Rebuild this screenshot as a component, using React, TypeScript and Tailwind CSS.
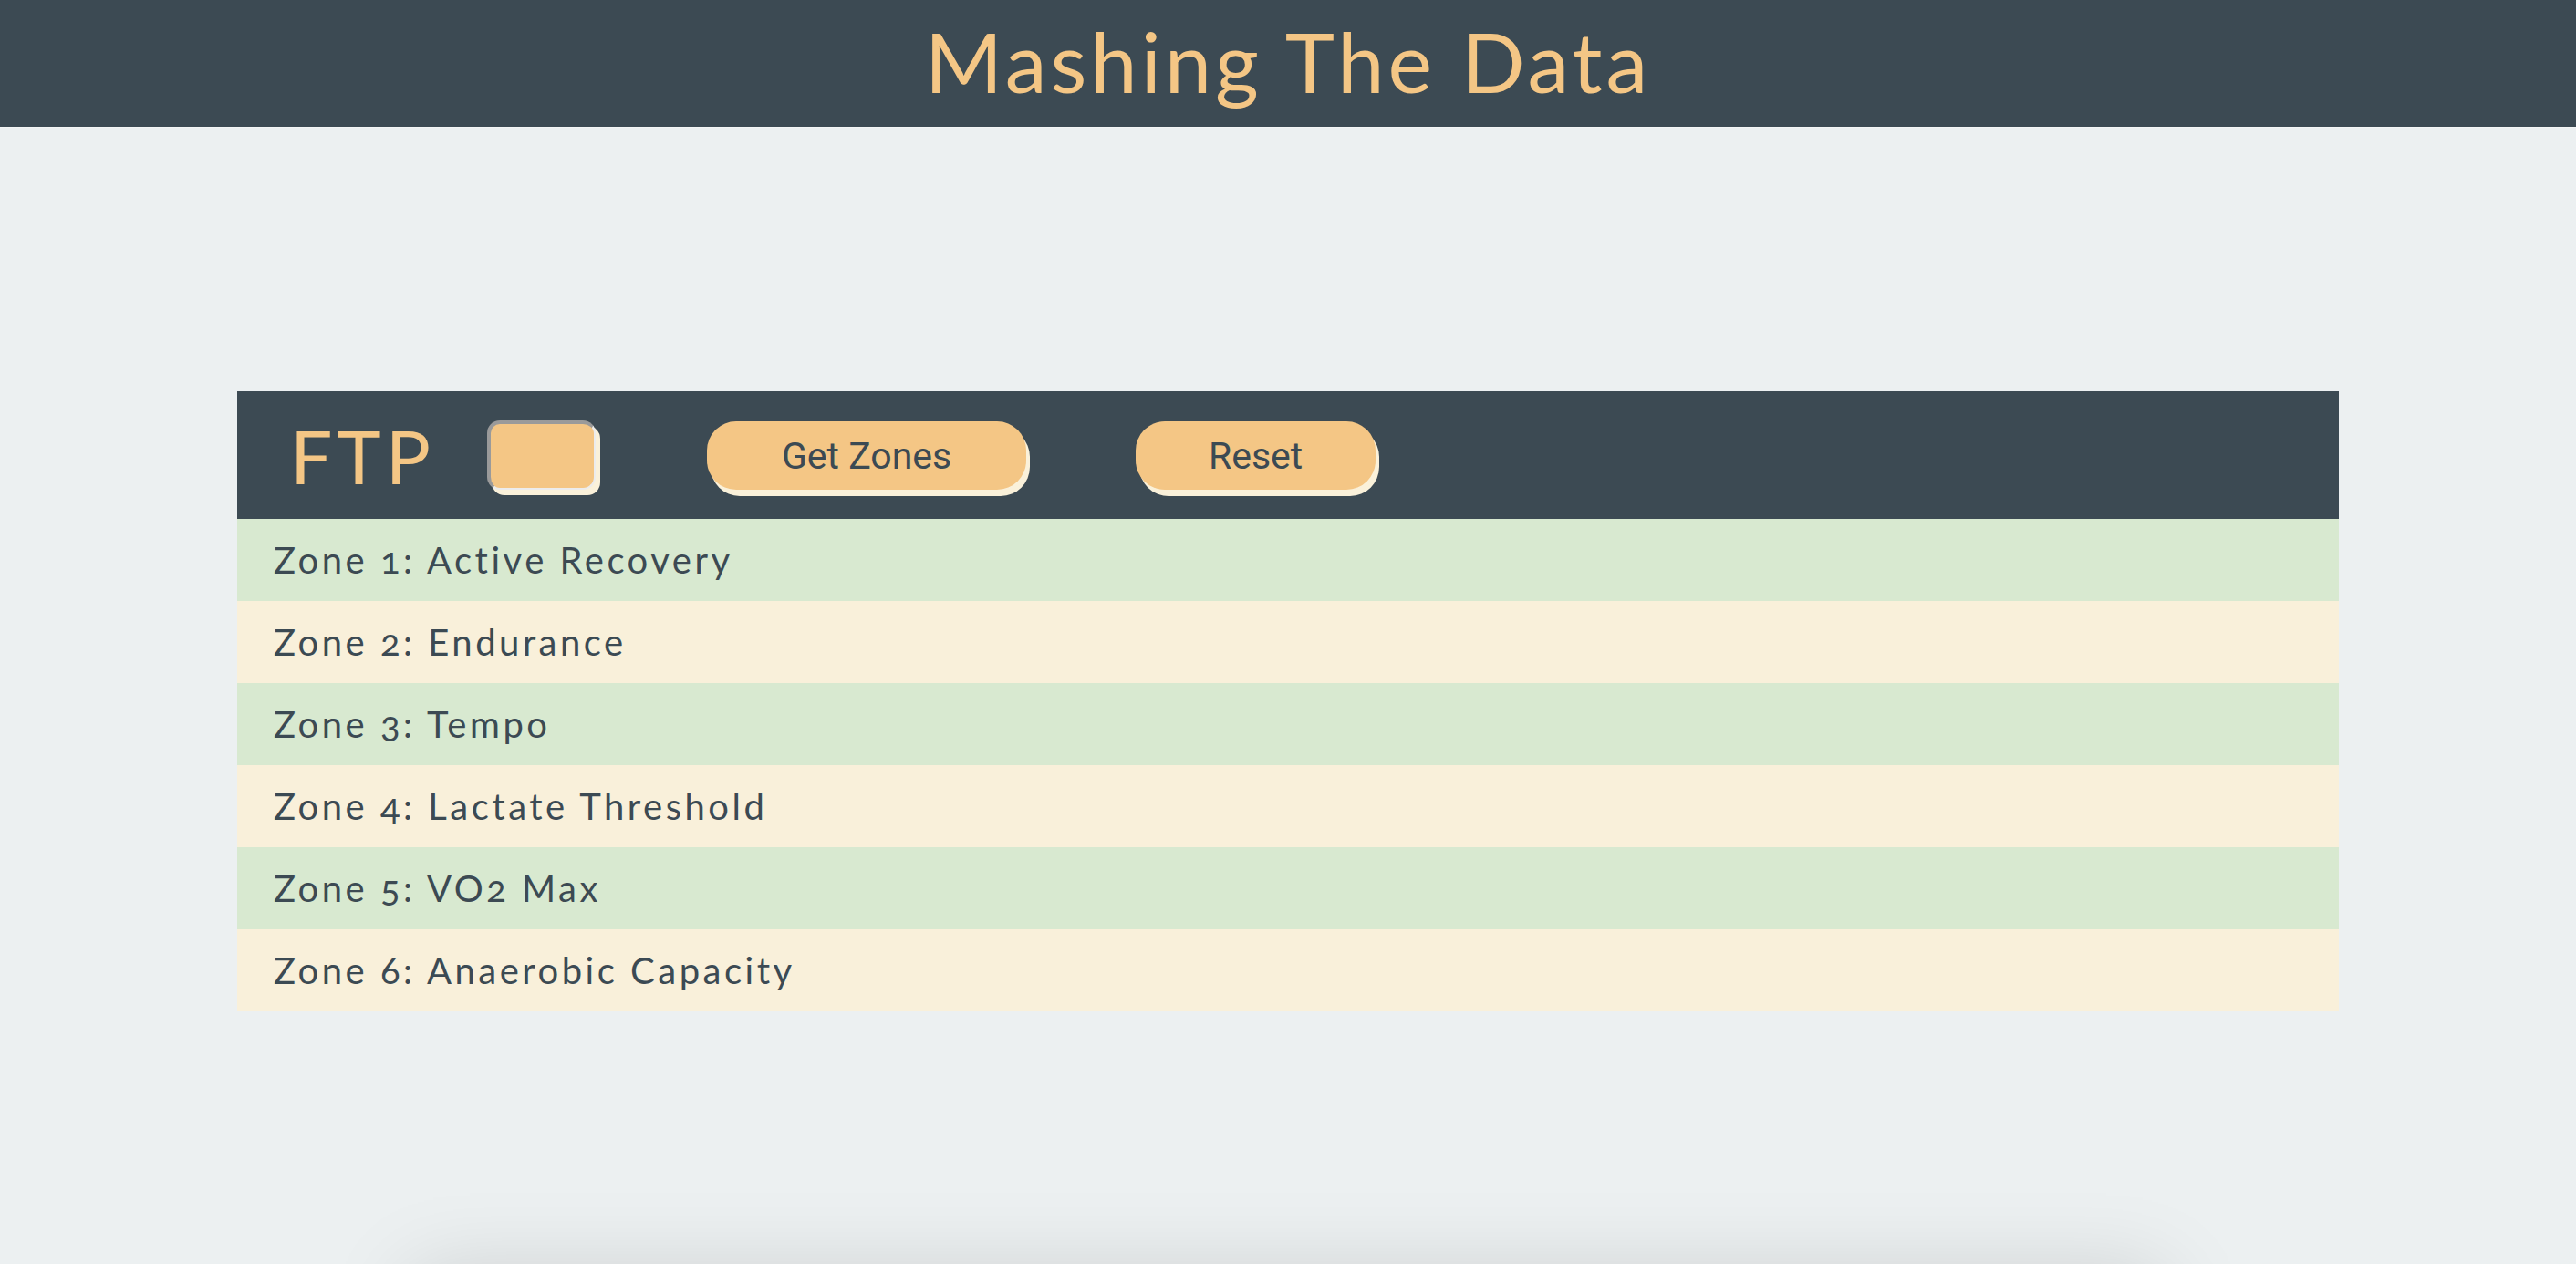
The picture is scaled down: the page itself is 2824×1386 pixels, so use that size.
import { useState } from 'react'

// Power zones, in the order they appear in the table.
const zones = [
  'Zone 1: Active Recovery',
  'Zone 2: Endurance',
  'Zone 3: Tempo',
  'Zone 4: Lactate Threshold',
  'Zone 5: VO2 Max',
  'Zone 6: Anaerobic Capacity',
]

export default function App() {
  const [ftp, setFtp] = useState('')

  return (
    <div className="min-h-screen bg-[#ecf0f1] font-['Lato',sans-serif]">
      <header className="h-[140px] bg-[#3c4a53] border-b border-[#f3f5f5] flex items-center justify-center">
        <h1 className="text-[92px] leading-none text-[#f4c685] tracking-[4px] -mt-[6px]">
          Mashing The Data
        </h1>
      </header>

      <main className="px-[260px] pt-[289px]">
        <div className="h-[140px] bg-[#3c4a53] flex items-center pl-[58px]">
          <span className="text-[82px] leading-none text-[#f4c685] tracking-[5px]">FTP</span>
          <input
            value={ftp}
            onChange={(e) => setFtp(e.target.value)}
            className="ml-[57px] w-[119px] h-[76px] rounded-[14px] bg-[#f4c685] border-t-4 border-l-4 border-r-2 border-b-2 border-t-[#9a9a9a] border-l-[#9a9a9a] border-r-[#ececec] border-b-[#ececec] shadow-[5px_6px_0_#faf1da] outline-none px-3 text-[32px] text-[#3c4a53]"
          />
          <button
            type="button"
            className="ml-[122px] w-[350px] h-[75px] rounded-[32px] bg-[#f4c685] shadow-[4px_7px_0_#faf1da] pt-[4px] text-[41px] text-[#3c4a53] font-['Roboto',sans-serif]"
          >
            Get Zones
          </button>
          <button
            type="button"
            onClick={() => setFtp('')}
            className="ml-[120px] w-[263px] h-[75px] rounded-[32px] bg-[#f4c685] shadow-[4px_7px_0_#faf1da] pt-[4px] text-[41px] text-[#3c4a53] font-['Roboto',sans-serif]"
          >
            Reset
          </button>
        </div>

        {zones.map((z, i) => (
          <div
            key={z}
            className={
              'h-[90px] flex items-center pl-[40px] text-[40px] tracking-[3.5px] text-[#3c4a53] oldstyle-nums ' +
              (i % 2 === 0 ? 'bg-[#d8e9d0]' : 'bg-[#f9f0da]')
            }
          >
            {z}
          </div>
        ))}
      </main>

      <div className="mt-[290px] mx-auto w-[1920px] h-[400px] bg-[#ecf0f1] shadow-[0_0_90px_rgba(0,0,0,0.15)]" />
    </div>
  )
}
